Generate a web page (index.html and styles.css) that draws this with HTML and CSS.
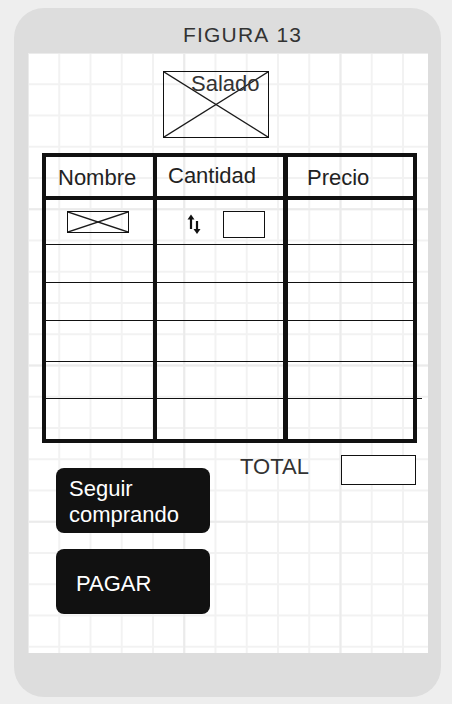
FILE: index.html
```html
<!DOCTYPE html>
<html lang="es">
<head>
<meta charset="utf-8">
<title>Figura 13</title>
<link rel="stylesheet" href="styles.css">
</head>
<body>
<div class="phone">
  <div class="title">FIGURA 13</div>
  <div class="screen">
    <div class="hero">
      <svg class="xlines" viewBox="0 0 100 100" preserveAspectRatio="none"><line x1="0" y1="0" x2="100" y2="100"/><line x1="100" y1="0" x2="0" y2="100"/></svg>
      <span class="hero-label">Salado</span>
    </div>

    <div class="table">
      <div class="row head">
        <div class="cell c1">Nombre</div>
        <div class="cell c2 cant">Cantidad</div>
        <div class="cell c3 prec">Precio</div>
      </div>
      <div class="row r1">
        <div class="cell c1"><div class="thumb"><svg class="xlines" viewBox="0 0 100 100" preserveAspectRatio="none"><line x1="0" y1="0" x2="100" y2="100"/><line x1="100" y1="0" x2="0" y2="100"/></svg></div></div>
        <div class="cell c2 qty">
          <svg class="sort" width="16" height="22" viewBox="0 0 16 22"><line x1="5" y1="5" x2="5" y2="16"/><polygon points="1.5,6.5 5,1.5 8.5,6.5"/><line x1="11" y1="8" x2="11" y2="18"/><polygon points="7.5,16 11,21 14.5,16"/></svg>
          <div class="qbox"></div>
        </div>
        <div class="cell c3"></div>
      </div>
      <div class="row r2"><div class="cell c1"></div><div class="cell c2"></div><div class="cell c3"></div></div>
      <div class="row r3"><div class="cell c1"></div><div class="cell c2"></div><div class="cell c3"></div></div>
      <div class="row r4"><div class="cell c1"></div><div class="cell c2"></div><div class="cell c3"></div></div>
      <div class="row r5"><div class="cell c1"></div><div class="cell c2"></div><div class="cell c3"></div></div>
      <div class="row r6"><div class="cell c1"></div><div class="cell c2"></div><div class="cell c3"></div></div>
    </div>

    <div class="bottom">
      <div class="buttons">
        <div class="btn btn-seguir">Seguir<br>comprando</div>
        <div class="btn btn-pagar">PAGAR</div>
      </div>
      <div class="total">
        <span class="total-label">TOTAL</span>
        <div class="total-box"></div>
      </div>
    </div>
  </div>
</div>
</body>
</html>
```
FILE: styles.css
```css
* { box-sizing: border-box; }
html, body { margin: 0; padding: 0; }
body {
  background: #eeeeee;
  font-family: "Liberation Sans", Arial, sans-serif;
  width: 452px;
  height: 704px;
  overflow: hidden;
}
.phone {
  margin: 8px 0 0 14px;
  width: 427px;
  height: 689px;
  background: #dddddd;
  border-radius: 30px;
  padding: 0 13px 0 14px;
}
.title {
  height: 45px;
  padding: 15px 0 0 155px;
  font-size: 21px;
  line-height: 24px;
  letter-spacing: 1.2px;
  word-spacing: 1px;
  color: #333;
  white-space: nowrap;
}
.screen {
  width: 400px;
  height: 600px;
  background-color: #fff;
  background-image:
    linear-gradient(to right, #ebebeb 0 2px, transparent 2px),
    linear-gradient(to bottom, #ebebeb 0 2px, transparent 2px),
    linear-gradient(to right, #f2f2f2 0 2px, transparent 2px),
    linear-gradient(to bottom, #f2f2f2 0 2px, transparent 2px);
  background-size: 156.25px 156.25px, 156.25px 156.25px, 31.25px 31.25px, 31.25px 31.25px;
  background-position: 155.25px 155.25px, 155.25px 155.25px, 30.25px 30.25px, 30.25px 30.25px;
  padding-top: 18px;
  overflow: hidden;
}
.xlines {
  position: absolute;
  inset: 0;
  width: 100%;
  height: 100%;
}
.xlines line { stroke: #1a1a1a; stroke-width: 1.4; vector-effect: non-scaling-stroke; }

.hero {
  position: relative;
  margin-left: 135px;
  width: 106px;
  height: 67px;
  border: 1.5px solid #111;
  padding: 0 0 0 27px;
}
.hero-label {
  position: relative;
  display: block;
  font-size: 22px;
  line-height: 26px;
  color: #333;
  margin-top: -1px;
}

.table {
  margin: 15px 0 0 14px;
  width: 375px;
  border: 4px solid #111;
  background: transparent;
}
.row {
  display: grid;
  grid-template-columns: 111px 131px 125px;
  border-bottom: 1px solid #111;
}
.row .c1 { border-right: 4px solid #111; }
.row .c2 { border-right: 5px solid #111; }
.row.head { height: 43px; border-bottom: 4px solid #111; }
.head .cell {
  font-size: 22px;
  line-height: 26px;
  color: #222;
  padding: 8px 0 0 12px;
  white-space: nowrap;
}
.head .cant { padding: 6px 0 0 11px; }
.head .prec { padding: 8px 0 0 19px; }
.row.r1 { height: 45px; }
.row.r2 { height: 38px; }
.row.r3 { height: 38px; }
.row.r4 { height: 41px; }
.row.r5 { height: 37px; position: relative; }
.row.r6 { height: 40px; border-bottom: 0; }
.row.r5::after {
  content: "";
  position: absolute;
  left: 366px;
  bottom: -1px;
  width: 10px;
  border-bottom: 1px solid #111;
}

.r1 .c1 { padding: 11px 0 0 21px; }
.thumb {
  position: relative;
  width: 62px;
  height: 22px;
  border: 1px solid #111;
}
.qty {
  display: flex;
  align-items: flex-start;
  padding: 12px 0 0 29px;
}
.sort { flex: none; margin-top: 1px; }
.sort line { stroke: #111; stroke-width: 2.2; }
.sort polygon { fill: #111; }
.qbox {
  margin: -1px 0 0 21px;
  width: 42px;
  height: 27px;
  border: 1px solid #111;
  background: #fff;
}

.bottom {
  display: flex;
  align-items: flex-start;
}
.buttons {
  margin: 25px 0 0 28px;
  display: flex;
  flex-direction: column;
  gap: 16px;
}
.btn {
  width: 154px;
  height: 65px;
  background: #111;
  border-radius: 8px;
  color: #fff;
  font-size: 22px;
  line-height: 26px;
}
.btn-seguir { padding: 8px 0 0 13px; }
.btn-pagar { padding: 22px 0 0 20px; }
.total {
  display: flex;
  align-items: flex-start;
  margin: 11px 0 0 30px;
}
.total-label {
  font-size: 22px;
  line-height: 26px;
  color: #333;
}
.total-box {
  margin: 1px 0 0 32px;
  width: 75px;
  height: 30px;
  border: 1px solid #111;
  background: #fff;
}
```
